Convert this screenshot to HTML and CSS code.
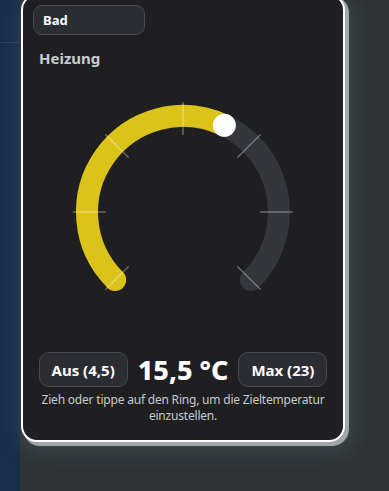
FILE: index.html
```html
<!DOCTYPE html>
<html lang="de">
<head>
<meta charset="utf-8">
<title>Heizung</title>
<link rel="stylesheet" href="styles.css">
</head>
<body>
<div class="page">
  <aside class="side"><div class="side-line"></div></aside>
  <main class="main">
    <section class="card">
      <button class="room-btn">Bad</button>
      <h2 class="title">Heizung</h2>
      <div class="gauge">
        <svg width="240" height="224" viewBox="0 0 240 224">
          <path class="track" d="M52.12 197.88 A96 96 0 1 1 187.88 197.88"/>
          <path class="value" d="M52.12 197.88 A96 96 0 0 1 161.33 43.35"/>
          <g class="ticks">
            <line x1="65.55" y1="184.45" x2="42.22" y2="207.78"/>
            <line x1="43" y1="130" x2="10" y2="130"/>
            <line x1="65.55" y1="75.55" x2="42.22" y2="52.22"/>
            <line x1="120" y1="53" x2="120" y2="20"/>
            <line x1="174.45" y1="75.55" x2="197.78" y2="52.22"/>
            <line x1="197" y1="130" x2="230" y2="130"/>
            <line x1="174.45" y1="184.45" x2="197.78" y2="207.78"/>
          </g>
          <circle class="handle" cx="161.33" cy="43.35" r="11.5"/>
        </svg>
      </div>
      <div class="controls">
        <button class="pill">Aus (4,5)</button>
        <div class="temp">15,5 °C</div>
        <button class="pill">Max (23)</button>
      </div>
      <p class="hint">Zieh oder tippe auf den Ring, um die Zieltemperatur einzustellen.</p>
    </section>
  </main>
</div>
</body>
</html>
```
FILE: styles.css
```css
* { box-sizing: border-box; }
html, body { margin: 0; padding: 0; }
body {
  width: 389px;
  height: 491px;
  overflow: hidden;
  background: #2c3436;
  font-family: "Noto Sans", "Open Sans", sans-serif;
}
.page {
  display: flex;
  height: 491px;
}
.side {
  width: 20px;
  flex: none;
  background: #1a2d4c;
}
.side-line {
  height: 43px;
  border-bottom: 1px solid #2b3e5c;
}
.main {
  flex: 1;
  background: #2c3436;
}
.card {
  margin-top: -6px;
  margin-left: 1px;
  width: 324px;
  background: #1f1f21;
  border: 2px solid #ffffff;
  border-radius: 16px;
  box-shadow: 3px 3px 0 1px #a3a7a9, 4px 6px 18px 6px rgba(90, 100, 102, 0.35);
  padding: 9px 10px 16px 10px;
  display: flex;
  flex-direction: column;
}
.room-btn {
  align-self: flex-start;
  width: 112px;
  height: 30px;
  background: #2a2d32;
  border: 1px solid #46494e;
  border-radius: 9px;
  color: #ffffff;
  font-family: inherit;
  font-weight: 700;
  font-size: 13px;
  text-align: left;
  padding: 0 0 0 9px;
}
.title {
  margin: 13px 0 0 6px;
  font-size: 15px;
  font-weight: 700;
  color: #c8cbd0;
  line-height: 20px;
}
.gauge {
  display: flex;
  justify-content: center;
  margin-top: 14px;
  height: 224px;
}
.track {
  fill: none;
  stroke: #33363b;
  stroke-width: 22;
  stroke-linecap: round;
}
.value {
  fill: none;
  stroke: #dbc31a;
  stroke-width: 22;
  stroke-linecap: round;
}
.ticks line {
  stroke: rgba(255, 255, 255, 0.33);
  stroke-width: 1.5;
}
.handle { fill: #ffffff; }
.controls {
  margin-top: 46px;
  display: flex;
  justify-content: center;
  align-items: center;
  gap: 10px;
}
.pill {
  height: 35px;
  background: #2a2d32;
  border: 1px solid #46494e;
  border-radius: 10px;
  color: #ffffff;
  font-family: inherit;
  font-weight: 700;
  font-size: 15px;
  padding: 0 12px;
}
.temp {
  color: #ffffff;
  font-weight: 800;
  font-size: 27px;
  line-height: 32px;
}
.hint {
  margin: 5px 0 0 0;
  text-align: center;
  font-size: 12px;
  letter-spacing: -0.2px;
  line-height: 16px;
  color: #c6cacf;
  padding: 0;
}
```
